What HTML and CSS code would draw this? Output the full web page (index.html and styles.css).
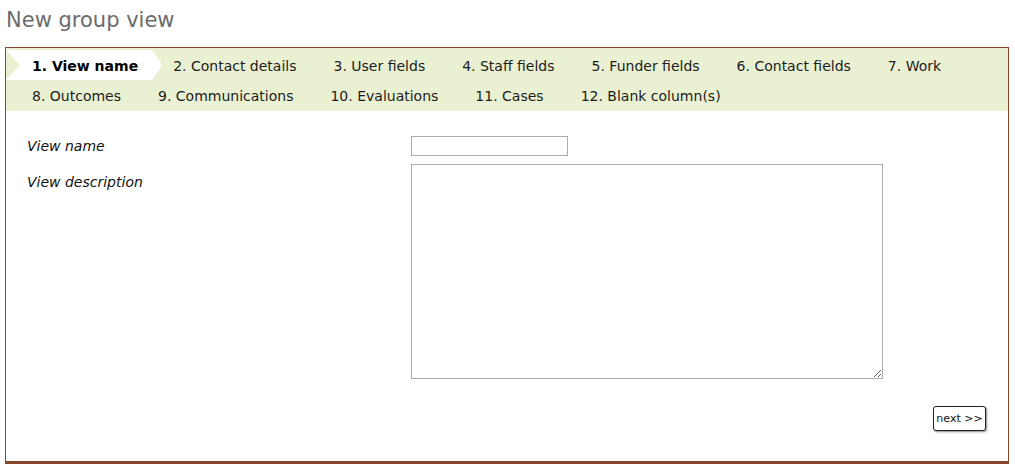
FILE: index.html
```html
<!DOCTYPE html>
<html lang="en">
<head>
<meta charset="utf-8">
<title>New group view</title>
<link rel="stylesheet" href="styles.css">
</head>
<body>
<h1 class="page-title">New group view</h1>
<div class="panel">
  <ul class="tabs">
    <li class="tab tab-active">1. View name</li>
    <li class="tab">2. Contact details</li>
    <li class="tab">3. User fields</li>
    <li class="tab">4. Staff fields</li>
    <li class="tab">5. Funder fields</li>
    <li class="tab">6. Contact fields</li>
    <li class="tab">7. Work</li>
    <li class="tab-break"></li>
    <li class="tab">8. Outcomes</li>
    <li class="tab">9. Communications</li>
    <li class="tab">10. Evaluations</li>
    <li class="tab">11. Cases</li>
    <li class="tab">12. Blank column(s)</li>
  </ul>
  <form class="form">
    <div class="form-row">
      <label class="form-label" for="vname">View name</label>
      <input class="text-input" id="vname" type="text">
    </div>
    <div class="form-row">
      <label class="form-label form-label-area" for="vdesc">View description</label>
      <textarea class="text-area" id="vdesc"></textarea>
    </div>
    <div class="form-actions">
      <button class="next-btn" type="button">next &gt;&gt;</button>
    </div>
  </form>
</div>
</body>
</html>
```
FILE: styles.css
```css
html, body {
  margin: 0;
  background: #ffffff;
}

body {
  padding: 8px 6px 0 5px;
  font-family: "DejaVu Sans", Verdana, sans-serif;
  color: #111;
}

.page-title {
  margin: 0;
  padding-left: 1px;
  font-size: 21px;
  line-height: 24px;
  font-weight: normal;
  color: #6b6b6b;
}

.panel {
  margin-top: 15px;
  border: 1px solid #88452a;
  border-bottom-width: 3px;
  background: #fff;
}

.tabs {
  list-style: none;
  margin: 0;
  padding: 2px 0 1px 17px;
  display: flex;
  flex-wrap: wrap;
  background: #eaf1d2;
}

.tab {
  height: 30px;
  box-sizing: border-box;
  padding: 3px 28px 0 9px;
  font-size: 14px;
  line-height: 27px;
  color: #1c1c1c;
  white-space: nowrap;
}

.tab-active {
  margin-left: -17px;
  padding: 3px 24px 0 26px;
  margin-right: 2px;
  font-weight: bold;
  color: #000;
  background: #ffffff;
  clip-path: polygon(0 0, calc(100% - 10px) 0, 100% 50%, calc(100% - 10px) 100%, 0 100%, 14px 50%);
}

.tab-break {
  flex-basis: 100%;
  height: 0;
}

.form {
  padding: 25px 0 30px 21px;
}

.form-row {
  display: grid;
  grid-template-columns: 384px auto;
  align-items: start;
  margin-bottom: 8px;
}

.form-label {
  font-size: 14px;
  line-height: 20px;
  font-style: italic;
  color: #111;
}

.form-label-area {
  margin-top: 8px;
}

.text-input {
  box-sizing: border-box;
  width: 157px;
  height: 20px;
  margin: 0;
  border: 1px solid #ababab;
  padding: 0 2px;
  font-family: "DejaVu Sans", Verdana, sans-serif;
  font-size: 12px;
}

.text-area {
  box-sizing: border-box;
  width: 472px;
  height: 215px;
  margin: 0;
  border: 1px solid #ababab;
  padding: 2px;
  font-family: "DejaVu Sans", Verdana, sans-serif;
  font-size: 12px;
}

.form-actions {
  display: flex;
  justify-content: flex-end;
  padding-top: 19px;
  padding-right: 22px;
}

.next-btn {
  width: 53px;
  height: 25px;
  padding: 0;
  border: 1px solid #222;
  border-radius: 3px;
  background: #fff;
  box-shadow: 1px 1px 2px #888;
  font-family: "DejaVu Sans", Verdana, sans-serif;
  font-size: 11px;
  color: #111;
}
```
